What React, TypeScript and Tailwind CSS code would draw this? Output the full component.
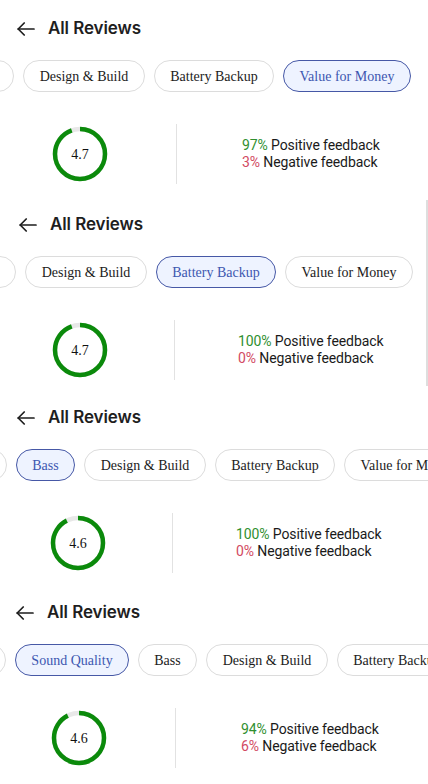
import React from "react";

type PanelProps = {
  active: string;
  rowShift: string;
  padLeft: string;
  rating: number;
  pos: number;
  heightCls: string;
  circleCls: string;
  dividerCls: string;
  textCls: string;
  scrollbar?: boolean;
};

const CHIPS: { label: string; w: string }[] = [
  { label: "All", w: "w-[60px]" },
  { label: "Sound Quality", w: "w-[114px]" },
  { label: "Bass", w: "w-[59px]" },
  { label: "Design & Build", w: "w-[122px]" },
  { label: "Battery Backup", w: "w-[120px]" },
  { label: "Value for Money", w: "w-[128px]" },
];

function Ring({ rating }: { rating: number }) {
  const r = 25;
  const c = 2 * Math.PI * r;
  const frac = rating / 5;
  return (
    <div className="relative w-[56px] h-[56px] flex items-center justify-center">
      <svg width="56" height="56" viewBox="0 0 56 56" className="absolute inset-0">
        <circle cx="28" cy="28" r={r} fill="none" stroke="#e8e8e8" strokeWidth="4.5" />
        <circle
          cx="28"
          cy="28"
          r={r}
          fill="none"
          stroke="#0b8a0b"
          strokeWidth="4.5"
          strokeDasharray={`${c * frac} ${c}`}
          transform="rotate(-90 28 28)"
        />
      </svg>
      <span className="relative text-[14px] text-[#111] font-['Liberation_Serif',serif]">
        {rating.toFixed(1)}
      </span>
    </div>
  );
}

function Panel(p: PanelProps) {
  return (
    <div className={`relative overflow-hidden ${p.heightCls}`}>
      <div className={`h-[56px] pt-[2px] flex items-center ${p.padLeft}`}>
        <svg width="18" height="14" viewBox="0 0 18 14" fill="none" stroke="#1c1c1c" strokeWidth="1.7" strokeLinecap="round" strokeLinejoin="round">
          <path d="M17 7H1.2" />
          <path d="M7.2 1L1.2 7l6 6" />
        </svg>
        <span className="ml-[13px] text-[17px] font-semibold text-[#1e1e1e] font-['Inter',sans-serif] tracking-[-0.1px]">
          All Reviews
        </span>
      </div>
      <div className="mt-[4px] h-[32px] overflow-hidden">
        <div className={`flex gap-[9px] ${p.rowShift}`}>
          {CHIPS.map((chip) => {
            const on = chip.label === p.active;
            return (
              <div
                key={chip.label}
                className={`${chip.w} shrink-0 h-[32px] rounded-full border flex items-center justify-center whitespace-nowrap text-[14px] font-['Liberation_Serif',serif] ${
                  on
                    ? "border-[#4658a6] bg-[#eef3ff] text-[#3d57b0]"
                    : "border-[#dcdcdc] bg-white text-[#1c1c1c]"
                }`}
              >
                {chip.label}
              </div>
            );
          })}
        </div>
      </div>
      <div className="mt-[32px] h-[60px] flex items-center">
        <div className={`flex justify-center ${p.circleCls}`}>
          <Ring rating={p.rating} />
        </div>
        <div className={`w-px h-[60px] bg-[#e2e2e2] ${p.dividerCls}`} />
        <div className={`flex flex-col text-[14px] leading-[17px] text-[#1a1a1a] font-['Roboto',sans-serif] tracking-[-0.1px] ${p.textCls}`}>
          <div>
            <span className="text-[#2f8f2f]">{p.pos}%</span> Positive feedback
          </div>
          <div>
            <span className="text-[#d24a62]">{100 - p.pos}%</span> Negative feedback
          </div>
        </div>
      </div>
      {p.scrollbar && (
        <div className="absolute right-0 top-[4px] w-[2px] h-[186px] bg-[#dedede]" />
      )}
    </div>
  );
}

export default function App() {
  return (
    <div className="w-[428px] h-[784px] bg-white overflow-hidden">
      <Panel
        active="Value for Money"
        rowShift="ml-[-237px]"
        padLeft="pl-[17px]"
        rating={4.7}
        pos={97}
        heightCls="h-[196px]"
        circleCls="w-[160px]"
        dividerCls="ml-[16px]"
        textCls="ml-[65px]"
      />
      <Panel
        active="Battery Backup"
        rowShift="ml-[-235px]"
        padLeft="pl-[19px]"
        rating={4.7}
        pos={100}
        heightCls="h-[193px]"
        circleCls="w-[160px]"
        dividerCls="ml-[14px]"
        textCls="ml-[63px]"
        scrollbar
      />
      <Panel
        active="Bass"
        rowShift="ml-[-176px]"
        padLeft="pl-[17px]"
        rating={4.6}
        pos={100}
        heightCls="h-[195px]"
        circleCls="w-[156px]"
        dividerCls="ml-[16px]"
        textCls="ml-[63px]"
      />
      <Panel
        active="Sound Quality"
        rowShift="ml-[-54px]"
        padLeft="pl-[16px]"
        rating={4.6}
        pos={94}
        heightCls="h-[200px]"
        circleCls="w-[158px]"
        dividerCls="ml-[17px]"
        textCls="ml-[65px]"
      />
    </div>
  );
}
